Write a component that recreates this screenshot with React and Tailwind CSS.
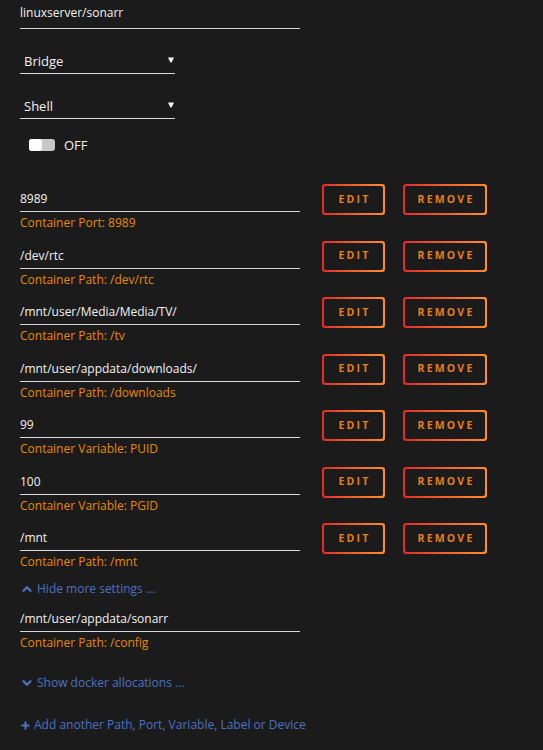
import { ChevronUp, ChevronDown, Plus } from 'lucide-react';

const rows = [
  { value: '8989', label: 'Container Port: 8989' },
  { value: '/dev/rtc', label: 'Container Path: /dev/rtc' },
  { value: '/mnt/user/Media/Media/TV/', label: 'Container Path: /tv' },
  { value: '/mnt/user/appdata/downloads/', label: 'Container Path: /downloads' },
  { value: '99', label: 'Container Variable: PUID' },
  { value: '100', label: 'Container Variable: PGID' },
  { value: '/mnt', label: 'Container Path: /mnt' },
];

function GradientButton({ width, children }) {
  return (
    <div className={`rounded-[3px] bg-gradient-to-r from-[#e22828] to-[#ff8c2f] p-[2px] ${width}`}>
      <div className="flex h-[27px] items-center justify-center rounded-[2px] bg-[#1c1b1b] pl-[2px] text-[10.5px] font-bold tracking-[2.2px] text-[#e57e20]">
        {children}
      </div>
    </div>
  );
}

function Triangle() {
  return (
    <svg width="6" height="6" viewBox="0 0 6 6" className="mr-[1px] mt-[-3px]">
      <path d="M0 0.5 H6 L3.6 5.5 H2.4 Z" fill="#f2f2f2" />
    </svg>
  );
}

function FieldRow({ value, label }) {
  return (
    <div className="flex h-[56.5px] items-start">
      <div className="w-[280px]">
        <div className="h-[28px] border-b border-[#d9d9d9] pt-[7px] leading-[16px] text-[#f2f2f2]">{value}</div>
        <div className="pt-[3px] leading-[16px] text-[#e68a00]">{label}</div>
      </div>
      <div className="ml-[22px] flex gap-[18px]">
        <GradientButton width="w-[63px]">EDIT</GradientButton>
        <GradientButton width="w-[84px]">REMOVE</GradientButton>
      </div>
    </div>
  );
}

export default function App() {
  return (
    <div className="min-h-[750px] bg-[#1c1b1b] pl-[20px] font-['Open_Sans',sans-serif] text-[12px] text-[#f2f2f2]">
      <div className="h-[29px] w-[280px] border-b border-[#d9d9d9] pt-[5px] leading-[16px]">linuxserver/sonarr</div>

      <div className="mt-[21px] flex h-[24px] w-[155px] items-center justify-between border-b border-[#d9d9d9] pl-[4px] text-[13px]">
        <span>Bridge</span>
        <Triangle />
      </div>
      <div className="mt-[21px] flex h-[24px] w-[155px] items-center justify-between border-b border-[#d9d9d9] pl-[4px] text-[13px]">
        <span>Shell</span>
        <Triangle />
      </div>

      <div className="ml-[9px] mt-[20px] flex h-[12px] items-center gap-[9px]">
        <div className="flex h-[12px] w-[26px] rounded-[3px] bg-[#c8c8c8]">
          <div className="h-[12px] w-[13px] rounded-[3px] bg-white" />
        </div>
        <span className="text-[13px] leading-[12px]">OFF</span>
      </div>

      <div className="mt-[33px]">
        {rows.map((r) => (
          <FieldRow key={r.value} {...r} />
        ))}
      </div>

      <div className="mt-[1.5px] flex h-[16px] items-center gap-[3px] text-[#4a72c2]">
        <ChevronUp size={14} strokeWidth={4} />
        <span>Hide more settings ...</span>
      </div>

      <div className="mt-[7px] w-[280px]">
        <div className="h-[28px] border-b border-[#d9d9d9] pt-[7px] leading-[16px]">/mnt/user/appdata/sonarr</div>
        <div className="pt-[3px] leading-[16px] text-[#e68a00]">Container Path: /config</div>
      </div>

      <div className="mt-[24px] flex h-[16px] items-center gap-[3px] text-[#4a72c2]">
        <ChevronDown size={14} strokeWidth={4} />
        <span>Show docker allocations ...</span>
      </div>

      <div className="mt-[26px] flex h-[16px] items-center gap-[3px] text-[#4a72c2]">
        <Plus size={11} strokeWidth={4.5} />
        <span>Add another Path, Port, Variable, Label or Device</span>
      </div>
    </div>
  );
}
